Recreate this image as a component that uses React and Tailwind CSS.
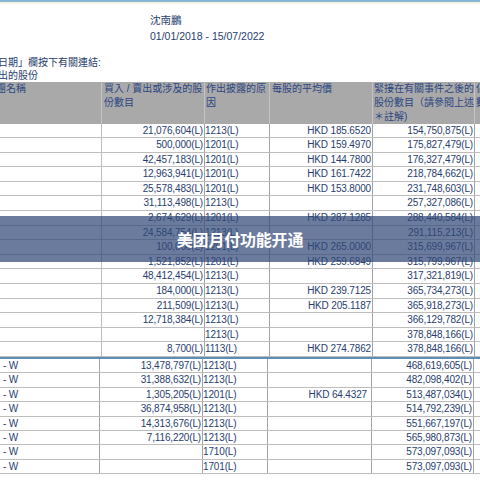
import React from "react";

const s1 = [
  ["21,076,604(L)", "1213(L)", "HKD 185.6520", "154,750,875(L)"],
  ["500,000(L)", "1201(L)", "HKD 159.4970", "175,827,479(L)"],
  ["42,457,183(L)", "1201(L)", "HKD 144.7800", "176,327,479(L)"],
  ["12,963,941(L)", "1201(L)", "HKD 161.7422", "218,784,662(L)"],
  ["25,578,483(L)", "1201(L)", "HKD 153.8000", "231,748,603(L)"],
  ["31,113,498(L)", "1213(L)", "", "257,327,086(L)"],
  ["2,674,629(L)", "1201(L)", "HKD 287.1285", "288,440,584(L)"],
  ["24,584,754(L)", "1213(L)", "", "291,115,213(L)"],
  ["100,000(L)", "1201(L)", "HKD 265.0000", "315,699,967(L)"],
  ["1,521,852(L)", "1201(L)", "HKD 259.6849", "315,799,967(L)"],
  ["48,412,454(L)", "1213(L)", "", "317,321,819(L)"],
  ["184,000(L)", "1213(L)", "HKD 239.7125", "365,734,273(L)"],
  ["211,509(L)", "1213(L)", "HKD 205.1187", "365,918,273(L)"],
  ["12,718,384(L)", "1213(L)", "", "366,129,782(L)"],
  ["", "1213(L)", "", "378,848,166(L)"],
  ["8,700(L)", "1113(L)", "HKD 274.7862", "378,848,166(L)"],
];

const s2 = [
  ["13,478,797(L)", "1213(L)", "", "468,619,605(L)"],
  ["31,388,632(L)", "1213(L)", "", "482,098,402(L)"],
  ["1,305,205(L)", "1201(L)", "HKD 64.4327", "513,487,034(L)"],
  ["36,874,958(L)", "1213(L)", "", "514,792,239(L)"],
  ["14,313,676(L)", "1213(L)", "", "551,667,197(L)"],
  ["7,116,220(L)", "1213(L)", "", "565,980,873(L)"],
  ["", "1710(L)", "", "573,097,093(L)"],
  ["", "1701(L)", "", "573,097,093(L)"],
];

const cell = "border-r border-[#a3a3a3] text-right pr-[1px] overflow-hidden whitespace-nowrap";

function Row1({ r }) {
  return (
    <div className="grid grid-cols-[102px_103px_65px_103px_102px_5px] h-[14.6px] leading-[14px] border-b border-[#bdbdbd] bg-white">
      <div className="border-r border-[#bdbdbd] overflow-hidden whitespace-nowrap">
        <span className="ml-[-2px]">’</span>
      </div>
      <div className={cell}>{r[0]}</div>
      <div className="border-r border-[#a3a3a3] text-left overflow-hidden whitespace-nowrap pl-0">{r[1]}</div>
      <div className={cell}>{r[2]}</div>
      <div className={cell}>{r[3]}</div>
      <div></div>
    </div>
  );
}

function Row2({ r }) {
  return (
    <div className="grid grid-cols-[100px_103px_65px_104px_102px_6px] h-[14.4px] leading-[14px] border-b border-[#bdbdbd] bg-white">
      <div className="border-r border-[#a3a3a3] overflow-hidden whitespace-nowrap pl-[3px]">- W</div>
      <div className={cell}>{r[0]}</div>
      <div className="border-r border-[#a3a3a3] text-left overflow-hidden whitespace-nowrap">{r[1]}</div>
      <div className="border-r border-[#a3a3a3] text-right pr-[4px] overflow-hidden whitespace-nowrap">{r[2]}</div>
      <div className={cell}>{r[3]}</div>
      <div></div>
    </div>
  );
}

export default function App() {
  return (
    <div className="relative w-[480px] h-[480px] overflow-hidden bg-white text-[#283d6d] font-['Liberation_Sans','Noto_Sans_CJK_TC',sans-serif]">
      <div className="h-[2px] bg-[#86b4d3]"></div>
      <div className="h-[2px] bg-[#f6f3e8]"></div>
      <div className="pl-[150px] pt-[8px] text-[10.5px] leading-[16px]">
        <div>沈南鵬</div>
        <div>01/01/2018 - 15/07/2022</div>
      </div>
      <div className="mt-[11.5px] text-[10px] leading-[13px] h-[26px]">
        <div className="ml-[-2px]">日期」欄按下有關連結:</div>
        <div className="ml-[-2px]">出的股份</div>
      </div>
      <div className="grid grid-cols-[102px_103px_65px_103px_102px_5px] h-[42px] bg-[#a9a9a9] text-[#2c4682] text-[10px] leading-[14px]">
        <div className="border-r border-[#c4c4c4] overflow-hidden whitespace-nowrap">
          <span className="ml-[-4px]">團名稱</span>
        </div>
        <div className="border-r border-[#c4c4c4] pl-[2px] overflow-hidden">
          <div className="whitespace-nowrap">買入 / 賣出或涉及的股</div>
          <div>份數目</div>
        </div>
        <div className="border-r border-[#c4c4c4] pl-[1px] overflow-hidden">
          <div className="whitespace-nowrap">作出披露的原</div>
          <div>因</div>
        </div>
        <div className="border-r border-[#c4c4c4] pl-[2px] overflow-hidden whitespace-nowrap">每股的平均價</div>
        <div className="border-r border-[#c4c4c4] pl-[1px] overflow-hidden whitespace-nowrap">
          <div>緊接在有關事件之後的</div>
          <div>股份數目（請參閱上述</div>
          <div>＊註解)</div>
        </div>
        <div className="overflow-hidden whitespace-nowrap pl-[1px]">
          <div>佔</div>
          <div>數</div>
        </div>
      </div>
      <div className="text-[10px] tracking-[-0.15px]">
        {s1.map((r, i) => (
          <Row1 key={i} r={r} />
        ))}
      </div>
      <div className="h-[2px] bg-[#5b8fb8]"></div>
      <div className="text-[10px] tracking-[-0.15px]">
        {s2.map((r, i) => (
          <Row2 key={i} r={r} />
        ))}
      </div>
      <div className="absolute left-0 right-0 top-[216px] h-[46px] bg-[rgba(50,72,119,0.72)] flex items-center justify-center">
        <span className="text-white font-bold text-[16px] tracking-[-0.2px] font-['Noto_Sans_CJK_SC',sans-serif]">美团月付功能开通</span>
      </div>
    </div>
  );
}
